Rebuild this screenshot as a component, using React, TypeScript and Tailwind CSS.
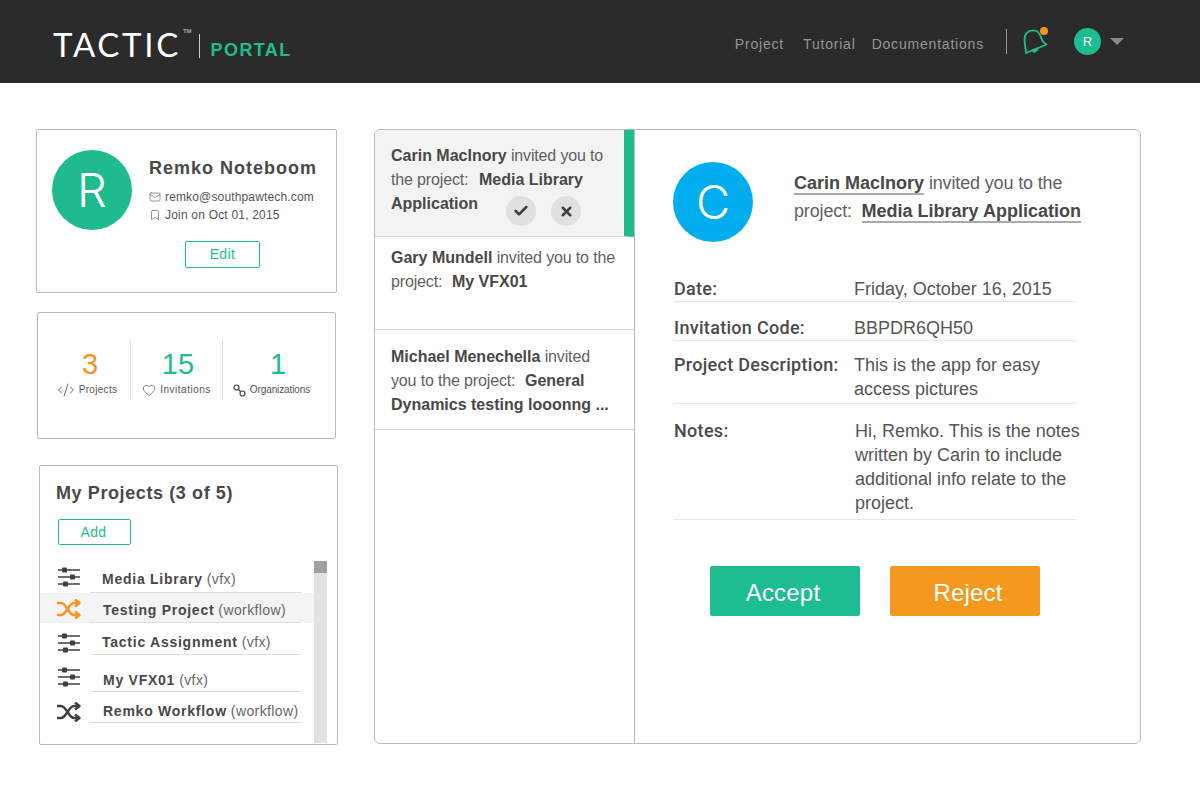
import { Check, X, Mail, Bookmark, Heart, CodeXml } from 'lucide-react';

const FONT = "font-['Liberation_Sans','Arial',sans-serif]";

// Slider glyph used for vfx projects
const Sliders = () => (
  <svg width="24" height="20" viewBox="0 0 24 20" className="text-[#3f3f3f]">
    <path d="M1 3h22M1 10h22M1 17h22" stroke="currentColor" strokeWidth="1.4" />
    <rect x="5" y="0.500" width="5" height="5" rx="1" fill="currentColor" />
    <rect x="13" y="7.500" width="5" height="5" rx="1" fill="currentColor" />
    <rect x="6" y="14.500" width="5" height="5" rx="1" fill="currentColor" />
  </svg>
);

// Crossed arrows used for workflow projects
const ShuffleIcon = ({ className }: { className: string }) => (
  <svg width="24" height="20" viewBox="0 0 24 20" fill="none" stroke="currentColor" strokeWidth="2.4" className={className}>
    <path d="M0 4h4c5.500 0 7.500 12 13 12h5M0 16h4c5.500 0 7.500-12 13-12h5" />
    <path d="M18 0.500l4.500 3.500L18 7.500M18 12.500l4.500 3.500L18 19.500" strokeLinejoin="round" />
  </svg>
);

const LinkIcon = () => (
  <svg width="13" height="13" viewBox="0 0 13 13" fill="none" stroke="#444" strokeWidth="1.2">
    <circle cx="3.500" cy="3.500" r="2.500" />
    <circle cx="9.500" cy="9.500" r="2.500" />
    <path d="M5 5l3 3" />
  </svg>
);

const TiltedBell = () => (
  <svg width="25" height="25" viewBox="0 0 25 25" fill="none" stroke="#1dbd92" strokeWidth="1.8" strokeLinejoin="round">
    <path d="M3 24C3 19 0.500 13 2 7 3.500 2 9 0.300 13.500 2 17 4 18 8 19 11c1 2 3 3.500 4.500 4.500z" />
    <path d="M9.500 21.500c1 2 4 2 5.500-2.500z" fill="#1dbd92" />
  </svg>
);

const Strong = ({ children }: { children: React.ReactNode }) => (
  <b className="text-[#484848] tracking-normal">{children}</b>
);

const projects = [
  { name: 'Media Library', kind: 'vfx', icon: 'sliders', row: 'h-[32px]', pb: 'pb-[4px] pl-[12px]', iconPb: 'pb-[6px]' },
  { name: 'Testing Project', kind: 'workflow', icon: 'shuffle', row: 'h-[30px]', pb: 'pb-[3px] pl-[13px]', iconPb: 'pb-[4px]', active: true },
  { name: 'Tactic Assignment', kind: 'vfx', icon: 'sliders', row: 'h-[32px]', pb: 'pb-[3px] pl-[12px]', iconPb: 'pb-[2px]' },
  { name: 'My VFX01', kind: 'vfx', icon: 'sliders', row: 'h-[37px]', pb: 'pb-[2px] pl-[13px]', iconPb: 'pb-[5px]' },
  { name: 'Remko Workflow', kind: 'workflow', icon: 'shuffle', row: 'h-[31px]', pb: 'pb-[2px] pl-[13px]', iconPb: 'pb-[1px]' },
];

const Stat = ({ value, color, icon, label, track, shift }: { value: string; color: string; icon: React.ReactNode; label: string; track: string; shift: string }) => (
  <div className="flex flex-col items-center">
    <div className={`text-[29px] leading-[32px] ${color} ${shift}`}>{value}</div>
    <div className={`flex items-center gap-[4px] text-[10px] leading-[14px] text-[#555] mt-[3px] ${track}`}>
      {icon}
      {label}
    </div>
  </div>
);

const Field = ({ label, children, pad }: { label: string; children: React.ReactNode; pad: string }) => (
  <div className={`flex border-b border-[#e6e6e6] w-[402px] ml-[1px] ${pad}`}>
    <div className="w-[180px] font-['Roboto',sans-serif] font-medium text-[#4a4a4a] shrink-0 whitespace-nowrap tracking-[0.3px]">{label}</div>
    <div className="text-[#555] whitespace-nowrap">{children}</div>
  </div>
);

export default function App() {
  return (
    <div className={`${FONT} w-[1200px] h-[800px] bg-white overflow-hidden`}>
      <header className="h-[83px] bg-[#2b2b2b] flex items-center justify-between pl-[53px] pr-[76px]">
        <div className="flex items-center mt-[6px]">
          <span className="text-white text-[33px] leading-none tracking-[2.7px] font-['Lato',sans-serif]">TACTIC</span>
          <span className="text-[#aaa] text-[6px] self-start font-bold ml-[2px] mt-[2px]">TM</span>
          <span className="w-px h-[24px] bg-[#ccc] ml-[7px] mr-[11px] mt-[3px]" />
          <span className="text-[#1dbd92] text-[18px] font-bold tracking-[1.4px] mt-[12px]">PORTAL</span>
        </div>
        <nav className="flex items-center text-[14px] text-[#969696] tracking-[0.8px]">
          <span className="mr-[19px] mt-[6px]">Project</span>
          <span className="mr-[16px] mt-[6px]">Tutorial</span>
          <span className="mt-[6px]">Documentations</span>
          <span className="w-px h-[25px] bg-[#999] ml-[22px] mr-[16px]" />
          <span className="relative mr-[26px] block">
            <TiltedBell />
            <span className="absolute -top-[2px] left-[17px] w-[8px] h-[8px] rounded-full bg-[#f7941d]" />
          </span>
          <span className="w-[27px] h-[27px] rounded-full bg-[#1dbd92] text-white text-[13px] tracking-normal flex items-center justify-center">R</span>
          <span className="ml-[9px] w-0 h-0 border-l-[7px] border-r-[7px] border-t-[7px] border-l-transparent border-r-transparent border-t-[#8a8a8a]" />
        </nav>
      </header>

      <main className="flex pt-[46px]">
        <div className="w-[338px] ml-[36px] shrink-0">
          <section className="w-[301px] h-[164px] border border-[#bbb] rounded-[2px] pl-[15px] pt-[20px] flex">
            <div className="w-[80px] h-[80px] rounded-full bg-[#1fbb8f] text-white text-[47px] font-['Inter',sans-serif] font-light flex items-center justify-center shrink-0">R</div>
            <div className="ml-[17px] flex flex-col">
              <div className="text-[18px] leading-[20px] font-bold text-[#484848] tracking-[1px] mt-[8px]">Remko Noteboom</div>
              <div className="flex items-center gap-[4px] text-[12px] text-[#555] mt-[10px] leading-[18px] tracking-[0.15px]">
                <Mail size={12} strokeWidth={1.2} />
                remko@southpawtech.com
              </div>
              <div className="flex items-center gap-[4px] text-[12px] text-[#555] leading-[18px] tracking-[0.2px]">
                <Bookmark size={12} strokeWidth={1.2} />
                Join on Oct 01, 2015
              </div>
              <button className="mt-[17px] ml-[36px] w-[75px] h-[27px] border border-[#1fbb8f] rounded-[2px] text-[#1fbb8f] text-[14px] tracking-[0.4px]">Edit</button>
            </div>
          </section>

          <section className="ml-[1px] mt-[19px] w-[299px] h-[127px] border border-[#bbb] rounded-[2px] pt-[27px]">
            <div className="flex h-[60px]">
              <div className="w-[93px] border-r border-[#ddd] pt-[8px] pl-[6px]">
                <Stat value="3" color="text-[#f7941d]" label="Projects" track="tracking-[0.3px]" shift="ml-[6px]" icon={<CodeXml size={18} strokeWidth={1.2} className="-my-[3px]" />} />
              </div>
              <div className="w-[92px] border-r border-[#ddd] pt-[8px]">
                <Stat value="15" color="text-[#1fbb8f]" label="Invitations" track="tracking-[0.5px]" shift="ml-[3px]" icon={<Heart size={14} strokeWidth={1.2} />} />
              </div>
              <div className="w-[112px] pt-[8px] pr-[15px]">
                <Stat value="1" color="text-[#1fbb8f]" label="Organizations" track="tracking-[-0.1px]" shift="ml-[13px]" icon={<LinkIcon />} />
              </div>
            </div>
          </section>

          <section className="ml-[3px] mt-[26px] w-[299px] h-[280px] border border-[#bbb] rounded-[2px] pt-[16px]">
            <h2 className="pl-[16px] text-[18px] leading-[22px] font-bold text-[#484848] tracking-[0.6px]">My Projects (3 of 5)</h2>
            <button className="ml-[18px] mt-[15px] w-[73px] h-[26px] border border-[#1fbb8f] rounded-[2px] text-[#1fbb8f] text-[14px] tracking-[0.4px] pr-[2px] block">Add</button>
            <div className="mt-[16px] flex">
              <ul className="w-[274px]">
                {projects.map((p) => (
                  <li key={p.name} className={`${p.row} flex ${p.active ? 'bg-[#f4f4f4]' : ''}`}>
                    <span className={`w-[50px] pl-[17px] flex items-end ${p.iconPb} shrink-0`}>
                      {p.icon === 'sliders' ? (
                        <Sliders />
                      ) : (
                        <ShuffleIcon className={p.active ? 'text-[#f7941d]' : 'text-[#3f3f3f]'} />
                      )}
                    </span>
                    <span className={`w-[211px] border-b border-[#ddd] flex items-end ${p.pb} text-[14px] leading-[18px] text-[#666] tracking-[0.4px] whitespace-nowrap`}>
                      <b className="text-[#484848] tracking-[0.75px] mr-[4px]">{p.name}</b>({p.kind})
                    </span>
                  </li>
                ))}
              </ul>
              <div className="w-[13px] h-[182px] bg-[#e2e2e2]">
                <div className="h-[12px] bg-[#a0a0a0]" />
              </div>
            </div>
          </section>
        </div>

        <section className="w-[767px] h-[615px] border border-[#bbb] rounded-[6px] flex overflow-hidden">
          <div className="w-[260px] border-r border-[#bbb] text-[16px] leading-[24px] text-[#5f5f5f] tracking-[-0.15px] shrink-0 whitespace-nowrap">
            <div className="h-[107px] bg-[#f3f3f3] border-b border-[#d5d5d5] border-r-[10px] border-r-[#1fbb8f] pl-[16px] pt-[14px] relative">
              <Strong>Carin MacInory</Strong> invited you to<br />the project:&nbsp; <span className="ml-[2px]"><Strong>Media Library</Strong></span><br /><Strong>Application</Strong>
              <div className="absolute left-[131px] top-[66px] flex gap-[15px]">
                <span className="w-[30px] h-[30px] rounded-full bg-[#e0e0e0] flex items-center justify-center"><Check size={16} strokeWidth={4} className="text-[#3f3f3f]" /></span>
                <span className="w-[30px] h-[30px] rounded-full bg-[#e0e0e0] flex items-center justify-center"><X size={15} strokeWidth={4} className="text-[#3f3f3f]" /></span>
              </div>
            </div>
            <div className="h-[93px] border-b border-[#d5d5d5] pl-[16px] pt-[9px]">
              <Strong>Gary Mundell</Strong> invited you to the<br />project:&nbsp; <span className="ml-[1px]"><Strong>My VFX01</Strong></span>
            </div>
            <div className="h-[100px] border-b border-[#d5d5d5] pl-[16px] pt-[15px]">
              <Strong>Michael Menechella</Strong> invited<br />you to the project:&nbsp; <span className="ml-[1px]"><Strong>General</Strong></span><br /><Strong>Dynamics testing looonng ...</Strong>
            </div>
          </div>

          <div className="flex-1 pl-[38px] pt-[32px]">
            <div className="flex items-center">
              <div className="w-[80px] h-[80px] rounded-full bg-[#00aeef] text-white text-[47px] font-['Inter',sans-serif] font-light flex items-center justify-center shrink-0">C</div>
              <div className="ml-[41px] -mt-[10px] text-[18px] leading-[28px] text-[#5f5f5f] tracking-[-0.15px] whitespace-nowrap">
                <b className="text-[#484848] border-b-2 border-[#aaa] tracking-normal">Carin MacInory</b> invited you to the<br />
                project:&nbsp; <b className="text-[#484848] border-b-2 border-[#aaa] tracking-normal">Media Library Application</b>
              </div>
            </div>
            <div className="mt-[35px] text-[18px] leading-[24px] flex flex-col">
              <Field label="Date:" pad="">Friday, October 16, 2015</Field>
              <Field label="Invitation Code:" pad="pt-[14px]">BBPDR6QH50</Field>
              <Field label="Project Description:" pad="pt-[12px] pb-[2px]">This is the app for easy<br />access pictures</Field>
              <Field label="Notes:" pad="pt-[15px] pb-[4px]"><span className="block pl-[1px]">Hi, Remko. This is the notes<br />written by Carin to include<br />additional info relate to the<br />project.</span></Field>
            </div>
            <div className="mt-[46px] ml-[37px] flex gap-[30px]">
              <button className="w-[150px] h-[50px] bg-[#1dbd92] text-white text-[24px] tracking-[0.2px] rounded-[2px] pr-[4px] pt-[3px]">Accept</button>
              <button className="w-[150px] h-[50px] bg-[#f39a1e] text-white text-[24px] tracking-[0.2px] rounded-[2px] pl-[6px] pt-[3px]">Reject</button>
            </div>
          </div>
        </section>
      </main>
    </div>
  );
}
